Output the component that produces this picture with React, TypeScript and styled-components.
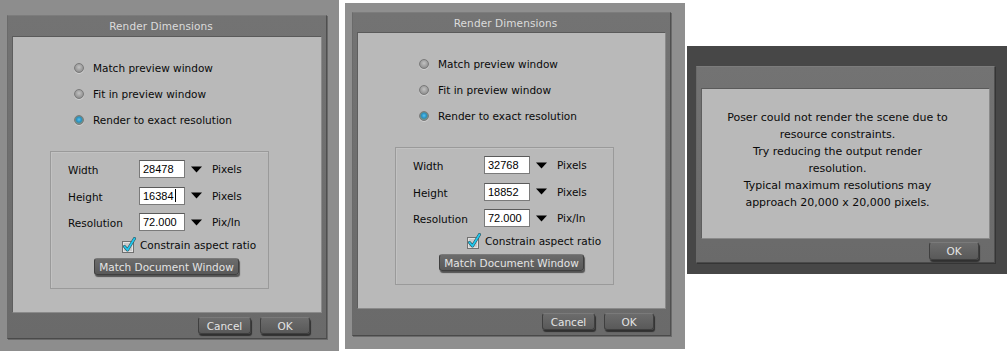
import React from "react";
import styled, { createGlobalStyle } from "styled-components";

const Global = createGlobalStyle`
  html, body { margin: 0; padding: 0; background: #ffffff; }
  body { font-family: "DejaVu Sans", "Liberation Sans", sans-serif; }
  * { box-sizing: border-box; }
`;

const Page = styled.div`
  display: flex;
  align-items: flex-start;
  width: 1007px;
  height: 351px;
  background: #ffffff;
`;

const Panel = styled.div<{ $w: number; $h: number; $top: number; $left: number; $bg: string; $padTop: number; $padLeft: number }>`
  width: ${(p) => p.$w}px;
  height: ${(p) => p.$h}px;
  margin-top: ${(p) => p.$top}px;
  margin-left: ${(p) => p.$left}px;
  background: ${(p) => p.$bg};
  padding-top: ${(p) => p.$padTop}px;
  padding-left: ${(p) => p.$padLeft}px;
  flex-shrink: 0;
`;

const DialogFrame = styled.div<{ $w: number; $h: number }>`
  width: ${(p) => p.$w}px;
  height: ${(p) => p.$h}px;
  display: flex;
  flex-direction: column;
  background: linear-gradient(#737373, #6a6a6a);
  border-top: 1px solid #7c7c7c;
  border-left: 1px solid #6a6a6a;
  border-right: 1px solid #4f4f4f;
  border-bottom: 1px solid #4a4a4a;
  box-shadow: 1px 1px 0 rgba(0, 0, 0, 0.25);
`;

const TitleBar = styled.div<{ $h: number }>`
  height: ${(p) => p.$h}px;
  flex-shrink: 0;
  display: flex;
  align-items: center;
  justify-content: center;
  padding-right: 12px;
  color: #dcdcdc;
  font-size: 10.5px;
  letter-spacing: 0.1px;
`;

const Content = styled.div`
  flex: 1;
  margin: 0 4px;
  background: #b9b9b9;
  border-top: 1px solid #5a5a5a;
  border-left: 1px solid #5e5e5e;
  border-right: 1px solid #8a8a8a;
  border-bottom: 1px solid #8a8a8a;
  display: flex;
  flex-direction: column;
`;

const Footer = styled.div<{ $h: number; $padTop: number; $padRight: number }>`
  height: ${(p) => p.$h}px;
  flex-shrink: 0;
  display: flex;
  justify-content: flex-end;
  align-items: flex-start;
  gap: 9px;
  padding-top: ${(p) => p.$padTop}px;
  padding-right: ${(p) => p.$padRight}px;
`;

const Button = styled.div<{ $w: number; $h?: number }>`
  width: ${(p) => p.$w}px;
  height: ${(p) => p.$h ?? 17}px;
  display: flex;
  align-items: center;
  justify-content: center;
  background: linear-gradient(#6c6c6c, #595959);
  border: 1px solid #3f3f3f;
  border-top-color: #7a7a7a;
  border-radius: 3px;
  box-shadow: 1px 2px 1px rgba(0, 0, 0, 0.55);
  color: #e4e4e4;
  font-size: 10.5px;
`;

const RadioList = styled.div`
  display: flex;
  flex-direction: column;
  padding-top: 18px;
  padding-left: 61px;
`;

const RadioRow = styled.div`
  height: 26px;
  display: flex;
  align-items: center;
  gap: 9px;
  font-size: 10.5px;
  color: #0a0a0a;
`;

const RadioDot = styled.span<{ $on?: boolean }>`
  width: 10px;
  height: 10px;
  border-radius: 50%;
  border: 1px solid #7a7a7a;
  background: ${(p) =>
    p.$on
      ? "radial-gradient(circle at 50% 45%, #55c4ee 0, #2a8fc2 2.5px, #5f8f8a 3.5px, #8c9a96 5px)"
      : "radial-gradient(circle at 50% 40%, #c2c2c2 0, #a2a2a2 3px, #8c8c8c 5px)"};
  box-shadow: 0 1px 0 rgba(255, 255, 255, 0.35);
`;

const GroupBox = styled.div`
  margin-top: 18px;
  margin-left: 37px;
  width: 219px;
  height: 138px;
  border: 1px solid #9a9a9a;
  box-shadow: inset 1px 1px 0 #c2c2c2;
  display: flex;
  flex-direction: column;
  padding-top: 8px;
`;

const FieldGrid = styled.div`
  display: grid;
  grid-template-columns: 71px 46px 11px 11px auto;
  grid-auto-rows: 18px;
  row-gap: 8.5px;
  padding-left: 17px;
  align-items: center;
  font-size: 10.5px;
  color: #0a0a0a;
`;

const FieldLabel = styled.span`
  padding-top: 2px;
`;

const FieldInput = styled.div`
  height: 18px;
  width: 46px;
  background: #ffffff;
  border: 1px solid #7a7a7a;
  border-top-color: #5a5a5a;
  display: flex;
  align-items: center;
  padding-left: 3px;
  font-family: "Liberation Sans", Arial, sans-serif;
  font-size: 11px;
  color: #000;
`;

const Caret = styled.span`
  display: inline-block;
  width: 1px;
  height: 13px;
  background: #000;
  margin-left: 1px;
`;

const ArrowCell = styled.span`
  grid-column: 4;
  display: flex;
  align-items: center;
  justify-content: center;
  margin-left: -11px;
`;

const Unit = styled.span`
  padding-left: 5px;
`;

const CheckRow = styled.div`
  display: flex;
  align-items: center;
  gap: 3px;
  margin-top: 6px;
  padding-left: 70px;
  height: 16px;
  font-size: 10.5px;
  color: #0a0a0a;
`;

const WideButtonRow = styled.div`
  margin-top: 5px;
  padding-left: 43px;
`;

const MessageContent = styled(Content)`
  align-items: center;
  padding-top: 20px;
  padding-right: 16px;
  font-size: 11px;
  line-height: 17px;
  color: #0a0a0a;
  text-align: center;
`;

const Para = styled.div``;

const DownArrow = () => (
  <svg width="11" height="7" viewBox="0 0 11 7">
    <path d="M0 0.5 H11 L5.5 6.5 Z" fill="#000" />
  </svg>
);

const CheckIcon = () => (
  <svg width="16" height="17" viewBox="0 0 16 17">
    <rect x="1.5" y="4.5" width="11" height="11" fill="#c9c9c9" stroke="#707070" />
    <rect x="2.5" y="5.5" width="9" height="9" fill="none" stroke="#e2e2e2" />
    <path d="M3.5 9.5 L6.5 13 L13.5 1.5" fill="none" stroke="#2a5560" strokeWidth="3" strokeLinecap="round" strokeLinejoin="round" />
    <path d="M3.5 9.5 L6.5 13 L13.5 1.5" fill="none" stroke="#22c8ee" strokeWidth="1.8" strokeLinecap="round" strokeLinejoin="round" />
  </svg>
);

type Dims = { w: string; h: string; caret?: boolean };

const RenderDialog = ({ dims, titleH, footerH, width }: { dims: Dims; titleH: number; footerH: number; width: number }) => (
  <DialogFrame $w={width} $h={324}>
    <TitleBar $h={titleH}>Render Dimensions</TitleBar>
    <Content>
      <RadioList>
        <RadioRow>
          <RadioDot />
          Match preview window
        </RadioRow>
        <RadioRow>
          <RadioDot />
          Fit in preview window
        </RadioRow>
        <RadioRow>
          <RadioDot $on />
          Render to exact resolution
        </RadioRow>
      </RadioList>
      <GroupBox>
        <FieldGrid>
          <FieldLabel>Width</FieldLabel>
          <FieldInput>{dims.w}</FieldInput>
          <span />
          <ArrowCell>
            <DownArrow />
          </ArrowCell>
          <Unit>Pixels</Unit>
          <FieldLabel>Height</FieldLabel>
          <FieldInput>
            {dims.h}
            {dims.caret && <Caret />}
          </FieldInput>
          <span />
          <ArrowCell>
            <DownArrow />
          </ArrowCell>
          <Unit>Pixels</Unit>
          <FieldLabel>Resolution</FieldLabel>
          <FieldInput>72.000</FieldInput>
          <span />
          <ArrowCell>
            <DownArrow />
          </ArrowCell>
          <Unit>Pix/In</Unit>
        </FieldGrid>
        <CheckRow>
          <CheckIcon />
          Constrain aspect ratio
        </CheckRow>
        <WideButtonRow>
          <Button $w={145}>Match Document Window</Button>
        </WideButtonRow>
      </GroupBox>
    </Content>
    <Footer $h={footerH} $padTop={4} $padRight={16}>
      <Button $w={53}>Cancel</Button>
      <Button $w={50}>OK</Button>
    </Footer>
  </DialogFrame>
);

export default function App() {
  return (
    <>
      <Global />
      <Page>
        <Panel $w={339} $h={351} $top={0} $left={0} $bg="#8d8d8d" $padTop={15} $padLeft={7}>
          <RenderDialog dims={{ w: "28478", h: "16384", caret: true }} titleH={20} footerH={25} width={320} />
        </Panel>
        <Panel $w={340} $h={346} $top={3} $left={6} $bg="#8f8f8f" $padTop={9} $padLeft={7}>
          <RenderDialog dims={{ w: "32768", h: "18852" }} titleH={19} footerH={26} width={319} />
        </Panel>
        <Panel $w={320} $h={228} $top={46} $left={2} $bg="#474747" $padTop={20} $padLeft={9}>
          <DialogFrame $w={299} $h={197}>
            <TitleBar $h={21} />
            <MessageContent>
              <Para>
                Poser could not render the scene due to
                <br />
                resource constraints.
              </Para>
              <Para>
                Try reducing the output render
                <br />
                resolution.
              </Para>
              <Para>
                Typical maximum resolutions may
                <br />
                approach 20,000 x 20,000 pixels.
              </Para>
            </MessageContent>
            <Footer $h={23} $padTop={3} $padRight={15}>
              <Button $w={50} $h={18}>OK</Button>
            </Footer>
          </DialogFrame>
        </Panel>
      </Page>
    </>
  );
}
